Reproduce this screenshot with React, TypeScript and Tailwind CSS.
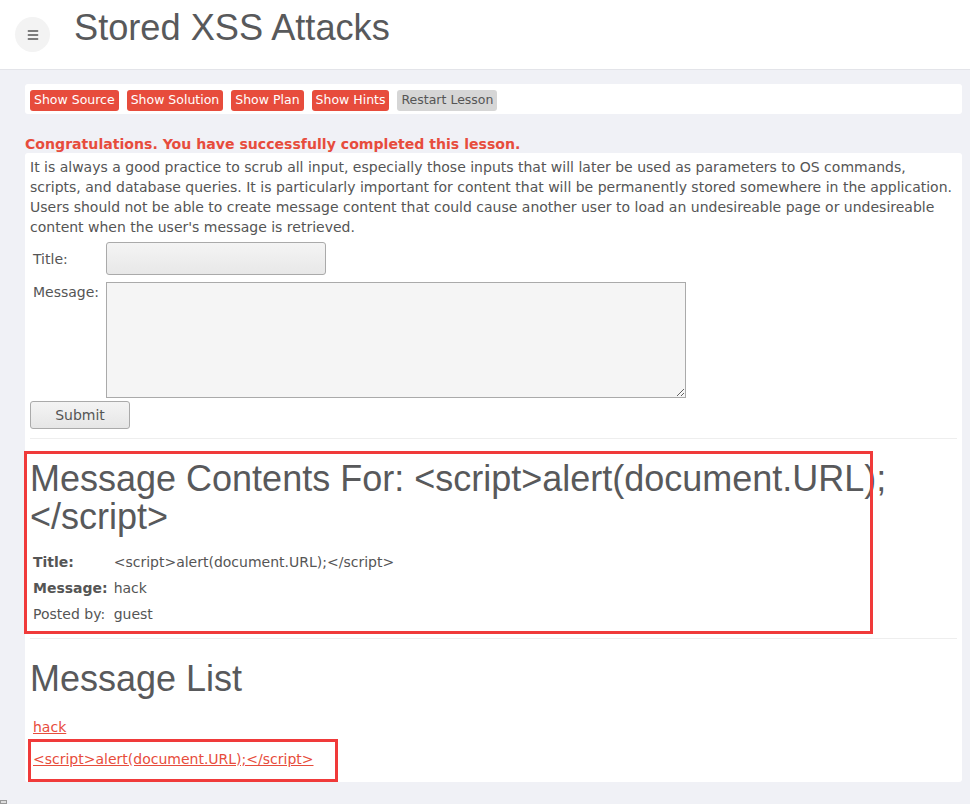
import { Menu } from 'lucide-react'

const sans = "font-['DejaVu_Sans',sans-serif]"
const heading = "font-['Liberation_Sans',Arial,sans-serif]"

const lessonButtons = ['Show Source', 'Show Solution', 'Show Plan', 'Show Hints']

export default function App() {
  return (
    <div className={`relative min-h-screen bg-[#f0f1f6] text-[#555] ${sans}`}>
      <header className="flex h-[70px] items-center border-b border-[#e3e4e9] bg-white">
        <button className="ml-[15px] flex h-[35px] w-[35px] items-center justify-center rounded-full bg-[#f3f3f3] text-[#555]">
          <Menu size={14} strokeWidth={2.5} />
        </button>
        <h1 className={`ml-[24px] -mt-[12px] text-[36.2px] text-[#58595b] ${heading}`}>Stored XSS Attacks</h1>
      </header>

      <main className="pl-[25px] pr-[8px] pt-[14px]">
        <div className="flex h-[30px] items-center gap-[8px] rounded-[3px] bg-white px-[5px] pt-[2px]">
          {lessonButtons.map((label) => (
            <button key={label} className="h-[21px] rounded-[3px] bg-[#e74c3c] px-[4px] text-[12.5px] text-white">
              {label}
            </button>
          ))}
          <button className="h-[21px] rounded-[3px] bg-[#d6d6d6] px-[4px] text-[12.5px] text-[#555]">Restart Lesson</button>
        </div>

        <p className="mt-[22px] text-[14.1px] font-bold leading-[17px] text-[#e74c3c]">
          Congratulations. You have successfully completed this lesson.
        </p>

        <div className="relative rounded-[3px] bg-white px-[5px] pt-[4px] pb-[12px]">
          <p className="text-[14px] leading-[20px]">
            It is always a good practice to scrub all input, especially those inputs that will later be used as parameters to OS commands,
            scripts, and database queries. It is particularly important for content that will be permanently stored somewhere in the application.
            Users should not be able to create message content that could cause another user to load an undesireable page or undesireable
            content when the user's message is retrieved.
          </p>

          <div className="mt-[5px] grid grid-cols-[73px_auto] items-start gap-y-[7px] pl-[3px] text-[14px]">
            <label className="pt-[7px]">Title:</label>
            <input className="h-[33px] w-[220px] rounded-[3px] border border-[#aaa] bg-gradient-to-b from-[#f4f4f4] to-[#e8e8e8]" />
            <label className="pt-[0px]">Message:</label>
            <textarea className="h-[116px] w-[580px] resize border border-[#aaa] bg-[#f5f5f5]" />
          </div>
          <button className="mt-[3px] h-[28px] w-[100px] rounded-[3px] border border-[#aaa] bg-gradient-to-b from-[#f4f4f4] to-[#e6e6e6] text-[14px] text-[#555]">
            Submit
          </button>

          <hr className="mt-[9px] border-[#eee]" />

          <div className="pt-[21px] pb-[11px]">
            <h2 className={`text-[36px] leading-[38px] text-[#58595b] ${heading}`}>
              Message Contents For: &lt;script&gt;alert(document.URL);
              <br />
              &lt;/script&gt;
            </h2>
            <table className="mt-[13px] ml-[3px] text-[14px]">
              <tbody>
                <tr className="h-[26px]">
                  <td className="pr-[6px] font-bold">Title:</td>
                  <td>&lt;script&gt;alert(document.URL);&lt;/script&gt;</td>
                </tr>
                <tr className="h-[26px]">
                  <td className="pr-[6px] font-bold">Message:</td>
                  <td>hack</td>
                </tr>
                <tr className="h-[26px]">
                  <td className="pr-[6px]">Posted by:</td>
                  <td>guest</td>
                </tr>
              </tbody>
            </table>
          </div>

          <hr className="border-[#eee]" />

          <h2 className={`mt-[20px] text-[36px] leading-[40px] text-[#58595b] ${heading}`}>Message List</h2>
          <div className="mt-[18px] flex flex-col gap-[11px] pl-[3px] text-[14px]">
            <a href="#" className="text-[#e74c3c] underline">hack</a>
            <a href="#" className="text-[#e74c3c] underline">&lt;script&gt;alert(document.URL);&lt;/script&gt;</a>
          </div>
        </div>
      </main>

      {/* annotation boxes drawn over the screenshot */}
      <div className="pointer-events-none absolute left-[24px] top-[451px] h-[183px] w-[849px] border-[3px] border-[#f03a3a]" />
      <div className="pointer-events-none absolute left-[28px] top-[739px] h-[43px] w-[310px] border-[3px] border-[#f03a3a]" />
      <div className="absolute bottom-0 left-0 h-[4px] w-[7px] border border-[#999] bg-[#ddd]" />
    </div>
  )
}
